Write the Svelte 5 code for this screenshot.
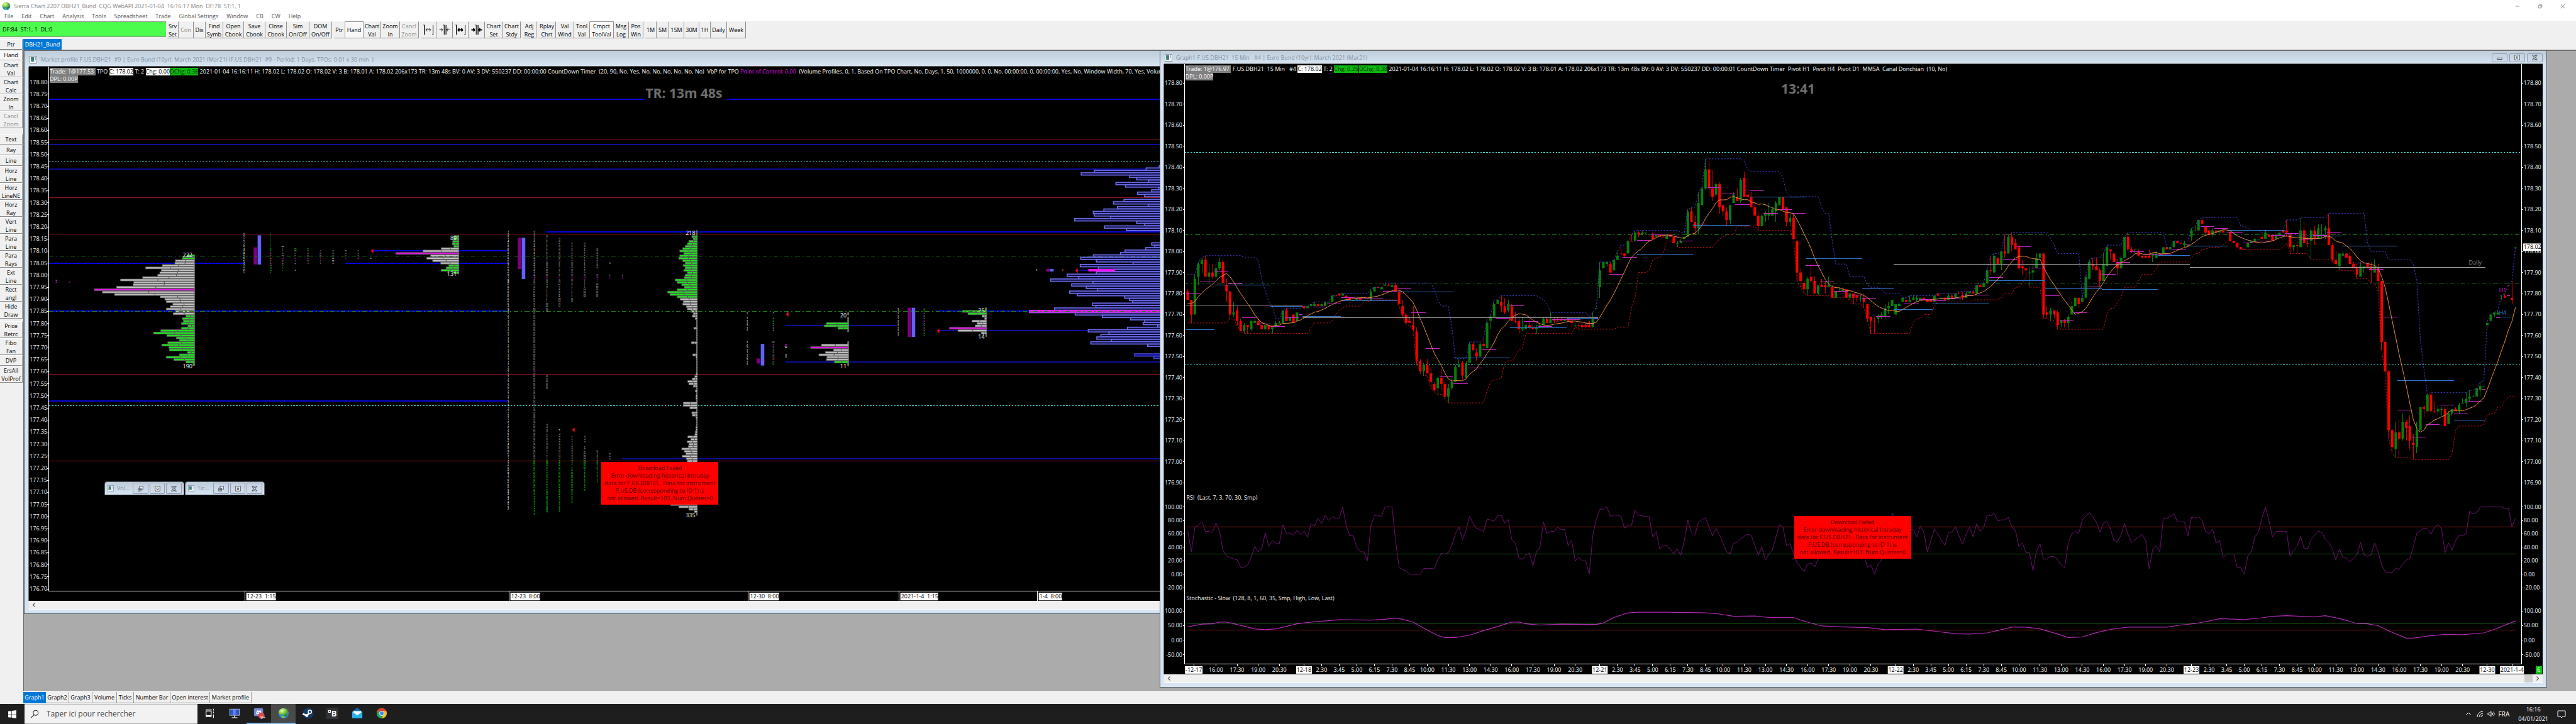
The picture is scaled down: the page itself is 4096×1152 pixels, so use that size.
<script>
  const menus = ['File', 'Edit', 'Chart', 'Analysis', 'Tools', 'Spreadsheet', 'Trade', 'Global Settings', 'Window', 'CB', 'CW', 'Help'];

  const toolGroups = [
    [['Srv Set', 18], ['Con', 24, 'off'], ['Dis', 19], ['Find Symb', 28], ['Open Cbook', 33], ['Save Cbook', 34], ['Close Cbook', 34], ['Sim On/Off', 36], ['DOM On/Off', 36]],
    [['Ptr', 18], ['Hand', 29, 'on'], ['Chart Val', 28], ['Zoom In', 30], ['Cancl Zoom', 30, 'off']],
    [['@wide', 25], ['@narrow', 26], ['@wideBold', 25], ['@narrowBold', 26], ['Chart Set', 29], ['Chart Stdy', 28]],
    [['Adj Reg', 22]],
    [['Rplay Chrt', 28], ['Val Wind', 29], ['Tool Val', 25], ['Cmpct ToolVal', 38, 'on'], ['Msg Log', 24], ['Pos Win', 23]],
    [['1M', 18], ['5M', 20], ['15M', 24], ['30M', 24], ['1H', 18], ['Daily', 26], ['Week', 30]],
  ];

  const inward = 'M2 11h7M9 11l-3-3M9 11l-3 3M24 11h-7M17 11l3-3M17 11l3 3';
  const outward = 'M8 11h10M8 11l3-3M8 11l3 3M18 11l-3-3M18 11l-3 3';

  const sideGroups = [
    ['Ptr', 'Hand*', 'Chart Val', 'Chart Calc', 'Zoom In', 'Cancl Zoom'],
    ['Text', 'Ray', 'Line', 'Horz Line', 'Horz LineNE', 'Horz Ray', 'Vert Line', 'Para Line', 'Para Rays', 'Ext Line', 'Rect angl', 'Hide Draw'],
    ['Price Retrc', 'Fibo Fan', 'DVP', 'ErsAll VolProf'],
  ];

  const sheets = [['Graph1', 36], ['Graph2', 37], ['Graph3', 37], ['Volume', 39], ['Ticks', 27], ['Number Bar', 58], ['Open interest', 63], ['Market profile', 66]];

  const failure = ['Download Failed', 'Error downloading historical Intraday', 'data for F.US.DBH21.\u00a0 Data for instrument', 'F.US.DB (corresponding to ID 1) is', 'not allowed. Result=103. Num Quotes=0'];

  const S = 0.8;

  /* ---- market profile: ticks are counted from 177.00 ---- */
  const L = { x: 46, y: 106 };
  const py = (t) => 163.3 + (180 - t) * 4.8;
  const lx = (v) => v * S - L.x;
  const ly = (v) => v * S - L.y;
  const leftPrices = Array.from({ length: 43 }, (_, k) => 180 - k * 5);

  const levels = [
    ['blue', 97, 2320, 173], ['red', 97, 2320, 156], ['navy', 97, 2320, 154], ['navy', 97, 2320, 144],
    ['red', 97, 2320, 132], ['blue', 1086, 2320, 118], ['red', 97, 2320, 117], ['blue', 742, 1009, 110], ['blue', 97, 488, 105],
    ['blue', 686, 1009, 105], ['blue', 97, 1009, 85], ['red', 97, 2320, 59], ['blue', 97, 1009, 48],
    ['navy', 1236, 2320, 24], ['red', 97, 2320, 23], ['navy', 1561, 1783, 79], ['navy', 1561, 2320, 64], ['blue', 1861, 2060, 85],
    ['navy', 1867, 2200, 77], ['navy', 2142, 2170, 102],
  ];

  const seq = (s) => s.split(' ').map(Number);
  const profiles = [
    { right: 386.5, top: 108, poc: 94, va: [84, 106], labels: [['222', 506], ['190', 727]],
      w: seq('15 24 38 39 64 97 66 69 73 103 147 121 122 155 199 183 159 68 59 56 43 48 56 38 42 17 24 22 26 13 26 67 81 55 36 30 53 65 51 50 14 30 56 41 17 3') },
    { right: 911.8, top: 116, poc: 109, va: [105, 111], labels: [['89', 472], ['131', 544]],
      w: seq('10 10 12 13 10 35 71 125 56 64 52 36 20 25 35 10') },
    { right: 1386, top: 118, poc: 999, va: [0, 90], labels: [['218', 462], ['335', 1024]],
      w: seq('2 2 11 8 17 20 24 29 35 27 35 37 29 24 28 24 27 20 24 26 44 40 31 26 40 59 54 40 34 28 29 22 20 13 8 10 4 2 2 2 7 2 2 2 2 2 12 2 2 2 2 9 3 2 2 2 2 2 2 3 5 10 19 17 8 2 4 2 3 3 2 28 28 15 2 11 10 3 2 2 2 3 3 4 5 19 13 20 17 18 31 26 23 30 22 20 25 30 28 30 35 40 38 36 40 44 46 50 50 48 45 50 52 53 37 17 6 2') },
    { right: 1686.5, top: 84, poc: 70, va: [65, 71], labels: [['20', 626], ['11', 728]],
      w: seq('2 0 2 2 44 48 21 2 0 0 0 0 2 54 75 30 46 59 43 44 28 2') },
    { right: 1961, top: 86, poc: 78, va: [76, 83], labels: [['25', 616], ['14', 669]],
      w: seq('3 48 37 9 4 29 19 23 74 57 11 2') },
  ];
  const rows = profiles.flatMap((p) =>
    p.w.map((w, k) => {
      const t = p.top - k;
      return { x: p.right - w, y: py(t) - 2.4, w, kind: t === p.poc ? 'poc' : t >= p.va[0] && t <= p.va[1] ? 'va' : 'out' };
    }).filter((r) => r.w > 0),
  );
  const spines = [[386, 108, 63], [911, 116, 101], [1385, 118, 1], [1686, 84, 84], [1686, 82, 77], [1686, 72, 63], [1960, 86, 75]];

  const volume = [
    [145, '1 27 130 156 60 46 22 87 68 2 16 44 30'],
    [131, '71 92 23 84 111 132 130 98 169 46 30 110 66'],
    [113, '16 10 28 69 78 132 157 126 53 158 122 90 126 184 161 217 133 175 146 124 179 164 70 60 54 134 127 209 259 168 114 58 30 33 4 64 142 101 117 125 96 137 24'],
    [67, '50 12'],
  ].flatMap(([top, s]) => seq(s).map((w, k) => ({ t: top - k, w })));

  const tpo = [
    [112, 98, 'a', 'g'], [112, 97, 'w', 'm'], [138, 97, 'x', 'm'],
    [485, 117, '11112234455677321', 'w'], [538, 117, 'iiiiii', 'e'], [538, 111, 'kk', 'e'], [538, 109, 'k', 'm'], [538, 108, 'k', 'g'], [538, 107, 'k', 'o'], [538, 106, 'kkq', 'g'], [538, 103, 'qqr', 'e'],
    [562, 112, 'm', 'w'], [562, 111, 'l', 'e'], [562, 110, 'lmm', 'g'], [562, 107, 'm', 'm'], [562, 106, 'pp', 'g'], [562, 104, 'ss', 'e'], [562, 102, 'r', 'g'],
    [587, 111, 'm', 'e'], [587, 110, 'mnn', 'g'], [587, 107, 'n', 'm'], [587, 106, 'tq', 'g'], [587, 102, 's', 'w'],
    [612, 111, 'n', 'e'], [612, 110, 'oop', 'g'], [612, 107, 'p', 'm'], [612, 106, 'us', 'g'],
    [637, 110, 'opp', 'g'], [637, 107, 't', 'm'], [637, 106, 'vt', 'g'],
    [662, 110, 'uuu', 'g'], [662, 107, 'uwv', 'w'], [687, 110, 'wuu', 'g'], [687, 107, 'v', 'm'], [712, 110, 'xxx', 'g'], [712, 107, 'w', 'm'], [737, 107, 'x', 'w'],
    [1010, 118, '112345566666667666578866666666643322' + '1'.repeat(25) + '2222221111111111112222355554555677776688776665544444332', 'w'],
    [1062, 118, 'GGZAAAAA', 'g'], [1062, 110, 'A', 'o'], [1062, 109, 'AAAAAAAAAA', 'g'], [1062, 99, 'A', 'm'], [1062, 98, 'CDDGHHHHKKKKMM' + 'N'.repeat(24), 'g'], [1062, 60, 'N', 'm'], [1062, 59, 'NNNNNN', 'g'], [1062, 53, 'O'.repeat(30), 'g'], [1062, 23, 'OOOOOOOOOOOOOPPPPPPPPPS', 'e'],
    [1087, 116, 'GCCCCCCCCCCBBBBBB', 'g'], [1087, 99, 'B', 'm'], [1087, 98, 'DGGHJJJJLLMMNN', 'g'], [1087, 58, 'OOOOOO', 'g'], [1087, 38, 'ddddcUUUUUUTTTT', 'g'], [1087, 23, 'QOOPPPPPPPPPPQQQQQQQQQ', 'e'],
    [1112, 115, 'GGEDDDDDDDCCCCCC', 'g'], [1112, 99, 'C', 'm'], [1112, 98, 'GHHJKKKKMMNN', 'g'], [1112, 36, 'e', 'w'], [1112, 34, 'dbbbbVVUUUU', 'g'], [1112, 23, 'TRROOOOOOORRRRRRSSSSSS', 'e'],
    [1137, 113, 'FEEEEEEEDDDDDD', 'g'], [1137, 99, 'D', 'm'], [1137, 98, 'HIKLLLLLNN', 'g'], [1137, 33, 'ccccbaVVVV', 'g'], [1137, 23, 'VTTTRRRRRRRRRSSSSS', 'e'],
    [1162, 113, 'GGFFFFFEEEEEGG', 'g'], [1162, 99, 'G', 'm'], [1162, 98, 'IJJLMMMM', 'g'], [1162, 33, 'ddd cbaWWW', 'g'], [1162, 23, 'WWWWSSSSSSSSS', 'e'],
    [1187, 111, 'GGGGGGFGG  H', 'g'], [1187, 99, 'H', 'm'], [1187, 98, 'J MMNNNN', 'g'], [1187, 27, 'bXXX', 'g'], [1187, 23, 'XXXXTTTTTT', 'e'],
    [1212, 105, 'G    I', 'g'], [1212, 99, 'I', 'm'], [1212, 26, 'baa', 'g'], [1237, 100, 'J', 'g'], [1237, 99, 'J', 'm'],
    [1485, 84, '1 111111    1221112211', 'w'], [1537, 84, '*', 'w'], [1537, 82, 'ddd', 'e'], [1537, 79, 'ddd', 'g'], [1537, 72, 'W', 'g'], [1537, 71, 'V', 'm'], [1537, 70, 'VVVUU', 'g'], [1537, 65, 'U', 'o'], [1537, 64, 'U', 'g'], [1537, 63, 'U', 'e'],
    [1562, 71, 'W', 'm'], [1562, 70, 'W  VV', 'w'],
    [1785, 86, '111111111111', 'w'], [1837, 86, 'kk', 'e'], [1837, 84, 'kkk', 'g'], [1837, 81, 'k', 'm'], [1837, 80, 'kk', 'g'], [1837, 78, 'k', 'o'], [1837, 77, 'k', 'g'], [1837, 76, 'kk', 'e'],
    [2060, 102, '1', 'w'], [2112, 102, '0', 'o'],
  ];
  const letters = tpo.flatMap(([x, top, s, c]) => [...s].map((ch, k) => ({ x, y: py(top - k), ch, c })).filter((l) => l.ch !== ' '));

  const blocks = [
    [504, 492, 7, 34, 'purple'], [512, 468, 7, 58, 'violet'], [1029, 473, 7, 62, 'purple'], [1037, 473, 7, 82, 'violet'],
    [1504, 713, 7, 10, 'purple'], [1512, 684, 7, 43, 'violet'], [1804, 612, 7, 58, 'purple'], [1812, 612, 7, 58, 'violet'],
    [2079, 535, 7, 5, 'purple'], [2087, 535, 7, 5, 'violet'], [2163, 535, 53, 5, 'pocbar'],
  ];
  const arrows = [[737, 499], [1137, 855], [1562, 625], [1862, 658], [2137, 538]];
  const leftDates = [[487, '12-23\u00a0 1:15', 47], [1012, '12-23\u00a0 8:00', 47], [1487, '12-30\u00a0 8:00', 47], [1787, '2021-1-4\u00a0 1:15', 60], [2062, '1-4\u00a0 8:00', 37]];

  /* ---- 15 minute candles: open close [high low], ticks above 177.00 ---- */
  const tape = `81 77 82 77;77 70 77 66;70 87 89 70;88 94 95 84;94 96 97 90;96 88 98 88;88 90 94 85;90 88 94 87;88 92 94 87;92 95 97 91;95 85 96 84;84 81 87 76;81 70 81 68;70 71 76 69;72 67 74 65;67 62 68 62;62 65 66 61;65 64 65 61;63 67 67 62;66 67 68 66;67 65 68 65;65 63 65 63;63 65 66 62;65 63 65 62;63 64 64 61;64 66 67 64;66 66 67 66;66 72 72 66;72 67 73 67;67 69 69 67;70 66 70 66;67 71 71 67;70 70;74 73 74 72;73 74;74 75;74 75 76 74;75 74;74 75;74 76;76 76;76 79;79 79;80 79;79 80;79 78 79 77;78 77;77 77;77 78;78 77;77 77;77 77;77 81 82 77;81 83;83 83;82 83;84 84 85 84;84 84 85 84;83 84;84 81 85 81;81 75 82 74;74 70 77 69;70 66 71 65;67 66 69 66;65 63 74 62;62 48 64 46;48 43 49 42;43 46 47 41;46 42 49 42;42 38 45 35;37 34 38 33;35 40 41 32;40 37 44 34;37 31 38 30;31 35 37 28;35 38 40 34;38 45 46 38;45 46 49 45;47 41 48 39;40 47 48 40;47 56 57 47;56 53 57 53;52 50 54 48;50 56 57 50;56 55 59 53;54 66 68 54;67 69 70 63;69 75 77 69;75 77;76 74 79 71;74 71 78 70;72 75 77 71;74 67 75 67;67 67 71 66;67 63 69 61;63 64 69 62;63 65 67 63;65 64 68 63;64 63 66 63;63 64 65 61;64 65 66 64;65 68 69 65;68 66 69 66;66 68 71 66;68 67 69 66;67 67 69 67;68 67 69 67;67 68;68 67;67 66 67 64;65 65 66 64;65 65 66 63;65 64;65 64 66 64;65 64 67 64;64 68 71 64;73 73;83 91 95 78;92 95;94 95 95 93;94 90 95 90;91 96;96 98 100 96;99 99 103 99;99 98 99 97;99 105;105 105 108 105;105 109 110 105;109 108 110 107;108 109 110 108;109 109 109 108;108 108;108 106 109 106;107 108;108 107;107 107;106 108;108 107 109 107;107 104;104 104 105 102;104 105 106 104;106 107;107 119 120 107;119 114 121 114;114 111 117 108;111 123 128 108;122 130 131 122;130 139 144 129;139 130 143 126;130 126 139 124;127 132 133 126;132 121 133 118;122 119 122 117;119 115 121 112;115 122 122 113;123 127 128 123;126 124 130 124;124 134 135 123;135 126 138 126;127 126 135 125;126 121 128 121;121 117 123 117;117 112 119 110;112 117 118 112;117 118 119 114;117 118 123 115;117 120 121 117;119 123 124 114;122 126;126 120;121 114 121 112;114 116 118 112;116 106 118 106;105 90 105 86;90 86 92 83;85 82 86 80;82 87 88 79;88 86 94 85;86 80 88 80;80 84 84 79;84 83 87 83;84 83 86 80;83 84 88 83;83 78 84 78;78 81;81 81 83 81;81 82 83 81;82 78 82 78;78 80 80 77;80 78 80 75;79 78 79 76;78 78 79 76;78 76 80 73;75 68 75 67;69 67 69 61;67 67 69 61;68 69 70 66;69 70 71 68;69 73 75 68;73 74 76 70;74 77;70 75;74 75 76 74;76 78;77 76;76 77 79 76;77 78 79 77;77 78 79 76;77 78;78 77;77 76;77 76;76 79;80 79;78 78;78 77;77 79 80 77;79 78 80 78;78 80;80 80 81 80;79 78 81 77;78 80 81 78;80 81;81 80;80 84;84 83 85 83;83 85;85 91 92 85;91 91 98 89;90 98 99 90;97 94 97 94;94 100 100 91;100 99 108 97;99 107 108 99;107 103 109 100;104 101 106 101;102 92 103 91;93 92 96 89;92 91 92 88;90 90 93 83;90 91 96 86;92 97 99 92;97 99 99 96;99 70 99 68;71 70 74 68;70 72 73 67;72 70 72 68;71 65 72 63;66 67 67 64;67 66 68 64;66 69 70 63;70 74 76 70;74 78;78 75 78 73;76 78;78 88;87 95 96 87;94 93 97 91;93 91 97 91;91 86 92 83;86 94 99 86;93 102 103 93;101 100 101 96;99 95 99 95;95 92 96 89;92 97 98 92;97 107;107 101 109 100;101 100 102 99;101 101 101 99;100 98 101 98;98 97;98 97;98 97 101 97;98 99 99 95;97 99 100 97;99 99;99 102;102 101;101 102;102 105;105 104;104 104;103 104 105 102;103 103;107 110 111 105;110 110 112 110;110 115;115 113 116 113;112 109 112 108;110 108 112 107;108 110 111 107;110 109;109 110;110 109;109 109;109 105;105 104;104 102;102 101;101 101;102 104;104 105;105 106 107 105;106 106;107 106;106 109 110 106;108 107;108 105;106 108;108 109;110 109;110 109 115 107;108 102 109 99;102 103 103 100;103 103 105 99;102 110 116 102;110 104 114 103;104 104 107 102;105 110 111 96;110 106 112 103;106 111 113 106;110 110 113 106;110 111 112 106;111 103 118 103;103 96 104 95;96 94 100 94;93 99 99 91;98 99 100 98;99 97;98 94 100 94;94 92 95 92;92 89 94 87;88 93 95 88;92 93 93 90;94 92;93 91 95 85;90 93 96 90;92 86 94 81;86 57 86 53;57 43 58 42;43 15 44 11;15 7 16 4;6 14 19 2;14 11 20 2;11 19 23 10;19 16 20 10;17 10 22 6;9 8 13 1;7 15 19 4;15 26;26 25 27 21;24 32;32 24 33 24;24 24 29 23;24 25 27 22;25 25 26 22;25 17 26 17;18 23 24 18;23 25 25 22;25 24 26 24;24 27 28 23;28 28 30 28;28 30 33 26;30 31 34 29;31 31 32 31;31 35;34 36 38 31;36 36;65 66 67 63;67 70;70 71 71 69;70 71 72 70;79 79 79 77;79 78 80 78;84 84;78 77 86 75;102 102`;
  const bars = tape.split(';').map((s, i) => {
    const [o, c, h, l] = seq(s.trim());
    return { i, o, c, h: h ?? Math.max(o, c), l: l ?? Math.min(o, c), up: c > o || (c === o && i % 3 !== 0) };
  });
  const R = { x: 1851, y: 102 };
  const bx = (i) => 2360.8 + 7 * i;
  const cy = (t) => 165.4 + (180 - t) * 4.184;
  const rx = (v) => v * S - R.x;
  const ry = (v) => v * S - R.y;
  const line = (pts) => pts.map(([x, y]) => x.toFixed(1) + ',' + y.toFixed(1)).join(' ');

  const upper = line(bars.map((b, i) => [bx(i), cy(Math.max(...bars.slice(Math.max(0, i - 10), i + 1).map((q) => q.h), i < 4 ? 89 : 0))]));
  const lower = line(bars.map((b, i) => [bx(i), cy(Math.min(...bars.slice(Math.max(0, i - 10), i + 1).map((q) => q.l), i < 8 ? 66 : 999))]));
  const closes = [73, 72, 75, 73, 76, 74, 77, 75, 76, 78, ...bars.map((b) => b.c)];
  const average = line(bars.map((b, i) => [bx(i), cy(closes.slice(i + 1, i + 11).reduce((a, v) => a + v, 0) / 10)]));

  const rsiY = (v) => 1142.3 - v * 1.34;
  const rsi = line(bars.map((b, i) => {
    let up = 0, down = 0;
    for (let k = i + 4; k <= i + 10; k++) {
      const d = closes[k] - closes[k - 1];
      if (d > 0) up += d; else down -= d;
    }
    return [bx(i), rsiY(up + down ? (100 * up) / (up + down) : 50)];
  }));
  const stoY = (v) => 1273.3 - v * 0.578;
  const stoPts = seq('0 46 4 55 7 56 9 62 11 62 16 48 19 39 22 36 25 39 31 56 35 62 43 70 52 69 56 72 59 76 61 72 64 62 68 35 71 16 73 9 76 9 80 17 84 33 88 47 92 62 94 62 96 56 100 52 106 55 113 54 116 54 118 59 121 78 125 94 128 96 137 96 138 95 143 95 147 94 151 90 155 82 161 83 165 78 172 78 176 62 180 49 185 46 193 43 198 36 207 38 212 31 218 22 222 21 227 25 231 36 234 45 238 45 242 39 247 21 250 9 254 11 258 26 262 37 267 45 278 45 282 52 286 57 290 66 293 74 300 71 305 77 308 82 312 84 320 80 323 84 328 72 332 57 335 56 338 50 341 32 346 7 348 7 352 14 357 20 362 19 368 25 371 37 377 66');
  const stochastic = line(Array.from({ length: stoPts.length / 2 }, (_, k) => [bx(stoPts[2 * k]), stoY(stoPts[2 * k + 1])]));

  const hourly = seq('0 80 4 85.5 8 90.5 12 84.6 16 68.5 20 65.4 24 64.3 28 68.5 36 73.7 40 75 44 78 48 77.6 52 77.4 56 81.2 60 82.3 64 71 68 54 72 40.5 76 37 80 44.6 84 53.4 88 68.3 92 74.3 96 66.8 100 64.4 104 67.7 108 67.7 112 65.4 120 89.2 124 97.2 128 105.4 132 108 136 107.3 140 104.9 144 113 148 130.3 152 127.4 156 122.3 160 128.8 164 118.2 168 120 172 118 176 93.2 180 85.5 184 81.2 188 79.2 192 77.8 196 69.2 204 75.2 208 77.3 212 76.7 216 77.6 220 79.2 224 79.2 228 87.6 232 96.2 236 102.2 240 92 244 79 248 67.3 252 70.9 256 83 260 89 264 94.7 268 99.8 272 98.8 276 98.4 280 101 288 111.9 292 110.9 296 109.2 300 104 304 105 308 107.7 312 108.5 316 105.8 320 107.6 324 109.2 332 94.5 336 91.6 340 68.8 344 24.6 348 11.8 352 17.7 356 27 360 22.8 364 28.7');
  const h1 = [
    ...Array.from({ length: hourly.length / 2 }, (_, k) => [hourly[2 * k] - 0.5, hourly[2 * k] + 3.5, hourly[2 * k + 1]]),
    [31.5, 32.5, 70], [115.5, 116.5, 67.8], [283.5, 284.5, 103.4], [367.5, 368.5, 34.5], [371.5, 372.5, 68.5], [374.5, 375.5, 79],
  ];
  const chain = seq('-0.5 62.7 7.5 84 23.5 73.8 32.5 69.1 43.5 76.7 59.5 80.7 75.5 49.5 91.5 63.7 107.5 68.3 116.5 0 127.5 98.8 143.5 112.3 159.5 125.9 175.5 96.5 191.5 82.1 200.5 72.5 211.5 75 227.5 86.2 243.5 82.3 259.5 82 275.5 98.2 284.5 102.7 295.5 110 311.5 107.2 327.5 102.7 343.5 38.7 359.5 19.9 368.5 0 372.5 68.8 375.5');
  const h4 = [];
  for (let k = 0; k + 2 < chain.length; k += 2) if (chain[k + 1] > 0) h4.push([chain[k], chain[k + 2], chain[k + 1]]);
  const daily = [[-0.5, 32.5, 74.6], [32.5, 116.5, 68.4], [200.5, 284.5, 93.8], [284.5, 368.5, 92.4]];

  const rightAxis = [
    ...Array.from({ length: 20 }, (_, k) => [(178.8 - k / 10).toFixed(2), cy(180 - k * 10)]),
    ...[100, 80, 60, 40, 20, 0, -20].map((v) => [v.toFixed(2), rsiY(v)]),
    ...[100, 50, 0, -50].map((v) => [v.toFixed(2), stoY(v)]),
  ];
  const clock = [[5, '2:30'], [10, '3:45'], [15, '5:00'], [20, '6:15'], [25, '7:30'], [30, '8:45'], [35, '10:00'], [41, '11:30'], [47, '13:00'], [53, '14:30'], [59, '16:00'], [65, '17:30'], [71, '19:00'], [77, '20:30']];
  const times = [[8, '16:00'], [14, '17:30'], [20, '19:00'], [26, '20:30'], ...[33, 117, 201, 285].flatMap((d) => clock.map(([o, s]) => [d + o, s]))];
  const days = [[1.7, '-12-17', 28], [33, '12-18', 25], [117, '12-21', 25], [201, '12-22', 25], [285, '12-23', 25], [369, '12-30', 25], [376, '2021-1-4', 38]];
</script>

{#snippet docIcon()}
  <svg class="doc" viewBox="0 0 12 12" aria-hidden="true"><rect x=".5" y=".5" width="11" height="11" fill="#fff" stroke="#8a949c" /><path d="M2 2h5v7H2z" fill="#3d7f86" /><path d="M2 6h2v3H2z" fill="#4aa35d" /><path d="M9 2h1v5H9zM7 9h3v1H7z" fill="#9aa" /></svg>
{/snippet}

{#snippet globe(size)}
  <svg width={size} height={size} viewBox="0 0 20 20" aria-hidden="true"><defs><radialGradient id="gl{size}" cx=".35" cy=".3" r=".8"><stop offset="0" stop-color="#e9fbb0" /><stop offset=".5" stop-color="#7cc832" /><stop offset="1" stop-color="#1c6a2c" /></radialGradient></defs><circle cx="10" cy="10" r="9" fill="#2d8fc4" /><path d="M4 3C9-1 17 2 18 7c-2 1-3 4-2 7-3 2-5 1-6-2C6 13 2 12 1 9c0-2 1-4 3-6z" fill="url(#gl{size})" /><path d="M6 16c2-2 5-1 6 2-2 1-5 0-6-2z" fill="#8fd140" /></svg>
{/snippet}

{#snippet caption(kind)}
  <svg viewBox="0 0 12 12" width="9" height="9" aria-hidden="true" fill="#fff" stroke="#4c5560" stroke-width="1.4">
    {#if kind === 'min'}<path d="M1 7h10v3H1z" />
    {:else if kind === 'max'}<path d="M1 1h10v10H1zM4.5 4.5h3v3h-3z" />
    {:else if kind === 'restore'}<path d="M4 1h7v6H4zM1 5h6v6H1zM3 7h2v2H3z" />
    {:else}<path d="M1 1h3l2 3 2-3h3L7.5 6 11 11H8L6 8l-2 3H1l3.500-5z" />{/if}
  </svg>
{/snippet}

{#snippet alertBox(cls)}
  <div class="alert {cls}" role="alert">{#each failure as row}<p>{row}</p>{/each}</div>
{/snippet}

<div class="app">
  <header class="title">
    {@render globe(14)}
    <span class="name">Sierra Chart 2207 DBH21_Bund&nbsp; CQG WebAPI 2021-01-04&nbsp; 16:16:17 Mon&nbsp; DF:78&nbsp; ST:1, 1</span>
    <button aria-label="Minimize"><svg viewBox="0 0 10 10"><path d="M1 5h8" /></svg></button>
    <button aria-label="Restore"><svg viewBox="0 0 10 10"><path d="M1.5 3.5h5v5h-5zM3.5 3.5v-2h5v5h-2" /></svg></button>
    <button aria-label="Close"><svg viewBox="0 0 10 10"><path d="M1 1l8 8M9 1l-8 8" /></svg></button>
  </header>

  <nav class="menu">{#each menus as m}<button>{m}</button>{/each}</nav>

  <div class="toolbar">
    <div class="status">DF:84&nbsp; ST:1, 1&nbsp; DL:0</div>
    {#each toolGroups as group}
      <div class="tools">
        {#each group as [label, w, state]}
          <button class={state} style:width="{w}px" aria-label={label.replace('@', 'Bar spacing ')}>
            {#if label[0] === '@'}
              <svg viewBox="0 0 26 22" width="20" height="19" aria-hidden="true">
                <path d={label.includes('wide') ? 'M3 1h2v20M23 1v20h-2M5 1v20' : 'M10 1h2v20M16 1v20M14 1v20'} fill="none" stroke="#000" stroke-width="1.2" />
                <path d={label.includes('wide') ? outward : inward} fill="none" stroke="#000" stroke-width={label.endsWith('Bold') ? 2.4 : 1.2} />
              </svg>
            {:else}{label}{/if}
          </button>
        {/each}
      </div>
    {/each}
  </div>

  <div class="main">
    <aside>
      {#each sideGroups as group}
        <div class="sidegroup">
          {#each group as s}
            <button class:on={s.endsWith('*')} class:tall={s.includes(' ')} class:off={s.startsWith('Cancl')}>{s.replace('*', '')}</button>
          {/each}
        </div>
      {/each}
    </aside>

    <div class="center">
      <div class="booktabs"><button class="book">DBH21_Bund</button></div>

      <main class="desk">
        <section class="win profile">
          <div class="bar">{@render docIcon()}<span>Market profile F.US.DBH21&nbsp; #9 | Euro Bund (10yr): March 2021 (Mar21) (F.US.DBH21&nbsp; #9 - Period: 1 Days, TPOs: 0.01 x 30 min&nbsp; )</span></div>
          <div class="view">
            <svg class="plot" viewBox="0 0 1810 850" role="img" aria-label="Market profile chart">
              <g transform="translate(-46 -106) scale(.8)">
                {#each levels as [c, a, b, t]}<path class="lv {c}" d="M{a} {py(t)}H{b}" />{/each}
                <path class="lv cyan" d="M97 {py(147)}H2305M97 {py(46)}H2305" />
                <rect x="1281" y="166" width="164" height="40" />
                {#each volume as v}
                  <rect class="vol" class:deep={v.t < 70} x={2305 - v.w} y={py(v.t) - 2} width={v.w + 30} height="4.5" />
                {/each}
                <rect class="pocbar" x="2046" y={py(85) - 2.5} width="280" height="5" />
                {#each spines as [x, a, b]}<path class="spine" d="M{x} {py(a) - 3}V{py(b) + 3}" />{/each}
                {#each rows as r}
                  <rect class="row {r.kind}" x={r.x} y={r.y + 0.5} width={r.w} height="3.8" />
                  {#if r.w > 6}<rect class="split" x={r.x + r.w * 0.5} y={r.y} width="1.5" height="4.8" />{/if}
                {/each}
                {#each blocks as [x, y, w, h, c]}<rect class={c} {x} {y} width={w} height={h} />{/each}
                <path class="lv green" d="M97 {py(108)}H2305M97 {py(85)}H2305" />
                {#each arrows as [x, y]}<path d="M{x} {y}l5-5v10z" fill="#f01010" />{/each}
                <path class="axis" d="M97 133V1175.500H2320" />
                {#each leftPrices as t}<path class="axis" d="M94 {py(t)}h3" />{/each}
                {#each leftDates as [x]}<path class="axis" d="M{x} 1175V1195" />{/each}
              </g>
              {#each letters as l}<text class="tpo {l.c}" x={lx(l.x)} y={ly(l.y) + 1}>{l.ch}</text>{/each}
              {#each leftPrices as t}<text class="num" x={lx(94)} y={ly(py(t)) + 3}>{(177 + t / 100).toFixed(2)}</text>{/each}
              {#each profiles as p}{#each p.labels as [s, y]}<text class="num" x={lx(p.right - 4)} y={ly(y) + 4}>{s}</text>{/each}{/each}
              <rect x="0" y={ly(1177)} width="50" height="16" />
              {#each leftDates as [x, s, w]}
                <rect x={lx(x) + 2} y={ly(1179)} width={w} height="12" fill="#fff" />
                <text class="date" x={lx(x) + 3} y={ly(1179) + 9}>{s}</text>
              {/each}
              <text class="count" x={lx(1283)} y={ly(195)}>TR: 13m 48s</text>
            </svg>
            <div class="info one">
              <span class="grey">Trade: 1@177.53&nbsp;</span><span>&nbsp;TPO&nbsp;</span><span class="white">C: 178.02</span><span>&nbsp;T: 2&nbsp;</span><span class="white">Chg: 0.00</span><span class="grn">DChg: 0.38</span><span>&nbsp;2021-01-04 16:16:11 H: 178.02 L: 178.02 O: 178.02 V: 3 B: 178.01 A: 178.02 206x173 TR: 13m 48s BV: 0 AV: 3 DV: 550237 DD: 00:00:00 CountDown Timer&nbsp; (20, 90, No, Yes, No, No, No, No, No, No)&nbsp; VbP for TPO <b>Point of Control: 0.00</b>&nbsp; (Volume Profiles, 0, 1, Based On TPO Chart, No, Days, 1, 50, 1000000, 0, 0, No, 00:00:00, 0, 00:00:00, Yes, No, Window Width, 70, Yes, Volume</span>
            </div>
            <div class="info two"><span class="grey">DPL: 0.00P</span></div>
            {@render alertBox('left')}
          </div>
          <div class="scroll"><button aria-label="Scroll left"><svg viewBox="0 0 8 10"><path d="M6 1L2 5l4 4" /></svg></button></div>
        </section>

        <section class="win graph">
          <div class="bar">
            {@render docIcon()}<span>Graph1 F.US.DBH21&nbsp; 15 Min&nbsp;&nbsp; #4 | Euro Bund (10yr): March 2021 (Mar21)</span>
            <div class="caps"><button aria-label="Minimize">{@render caption('min')}</button><button aria-label="Maximize">{@render caption('max')}</button><button aria-label="Close">{@render caption('close')}</button></div>
          </div>
          <div class="view">
            <svg class="plot" viewBox="0 0 2192 971" role="img" aria-label="Candlestick chart with RSI and stochastic">
              <g transform="translate(-1851 -102) scale(.8)">
                <path class="lv cyan" d="M2354 {cy(147)}H5010M2354 {cy(46)}H5010" />
                <path class="lv green" d="M2354 {cy(108)}H5010M2354 {cy(85)}H5010" />
                {#each bars as b}
                  <g class:rise={b.up} class:fall={!b.up}>
                    {#if b.h > b.l}<path class="wick" d="M{bx(b.i)} {cy(b.h)}V{cy(b.l)}" />{/if}
                    <rect x={bx(b.i) - 2.5} y={cy(Math.max(b.o, b.c))} width="5" height={Math.max(1.25, Math.abs(b.o - b.c) * 4.184)} />
                  </g>
                {/each}
                <polyline class="band hi" points={upper} />
                <polyline class="band lo" points={lower} />
                {#each daily as [a, b, t]}<path class="seg day" d="M{bx(a)} {cy(t)}H{bx(b)}" />{/each}
                {#each h4 as [a, b, t]}<path class="seg four" d="M{bx(a)} {cy(t)}H{bx(b)}" />{/each}
                {#each h1 as [a, b, t]}<path class="seg hour" d="M{bx(a)} {cy(t)}H{bx(b)}" />{/each}
                <polyline class="avg" points={average} />
                <polyline class="rsi" points={rsi} />
                <path class="seg r" d="M2360 {rsiY(70)}H5000M2360 {stoY(35)}H5000" />
                <path class="seg g" d="M2360 {rsiY(30)}H5000M2360 {stoY(59)}H5000" />
                <polyline class="sto" points={stochastic} />
                <path class="axis" d="M2354 127V1321H5012V127" />
                {#each rightAxis as [, y]}<path class="axis" d="M2351 {y}h3M5012 {y}h3" />{/each}
                {#each times as [i]}<path class="axis" d="M{bx(i)} 1321v4" />{/each}
                {#each days as [i]}<path class="axis" d="M{bx(i)} 1321v4" />{/each}
              </g>
              {#each rightAxis as [s, y]}
                <text class="num" x={rx(2350)} y={ry(y) + 3}>{s}</text>
                <text class="num first" x={rx(5016)} y={ry(y) + 3}>{s}</text>
              {/each}
              <rect x={rx(5015)} y={ry(cy(102)) - 6} width="28" height="12" fill="#fff" />
              <text class="date" x={rx(5016)} y={ry(cy(102)) + 3}>178.02</text>
              {#each times as [i, s]}<text class="num mid" x={rx(bx(i))} y={ry(1332) + 3}>{s}</text>{/each}
              {#each days as [i, s, w]}
                <rect x={rx(bx(i)) - w / 2} y={ry(1325)} width={w} height="12" fill="#fff" />
                <text class="date mid" x={rx(bx(i))} y={ry(1332) + 3}>{s}</text>
              {/each}
              <rect x={rx(5040)} y={ry(1325)} width="10" height="12" fill="#0fc40f" />
              <text class="num mid" x={rx(5046)} y={ry(1332) + 3}>6</text>
              <text class="num first" x={rx(2358)} y={ry(990) + 3}>RSI&nbsp; (Last, 7, 3, 70, 30, Smp)</text>
              <text class="num first" x={rx(2358)} y={ry(1190) + 3}>Stochastic - Slow&nbsp; (128, 8, 1, 60, 35, Smp, High, Low, Last)</text>
              <text class="num first dim" x={rx(4907)} y={ry(523) + 3}>Daily</text>
              <text class="num first mag" x={rx(4967)} y={ry(578) + 3}>H1</text>
              <text class="num first sky" x={rx(4967)} y={ry(623) + 3}>H4</text>
              <text class="count" x={rx(3540)} y={ry(186)}>13:41</text>
            </svg>
            <div class="info one">
              <span class="grey">Trade: 1@176.97&nbsp;</span><span>&nbsp;F.US.DBH21&nbsp; 15 Min&nbsp;&nbsp; #4&nbsp;</span><span class="white">C: 178.02</span><span>&nbsp;T: 2&nbsp;</span><span class="grn">Chg: 0.25</span><span class="grn">DChg: 0.38</span><span>&nbsp;2021-01-04 16:16:11 H: 178.02 L: 178.02 O: 178.02 V: 3 B: 178.01 A: 178.02 206x173 TR: 13m 48s BV: 0 AV: 3 DV: 550237 DD: 00:00:01 CountDown Timer&nbsp; Pivot H1&nbsp; Pivot H4&nbsp; Pivot D1&nbsp; MMSA&nbsp; Canal Donchian&nbsp; (10, No)</span>
            </div>
            <div class="info two"><span class="grey">DPL: 0.00P</span></div>
            {@render alertBox('right')}
          </div>
          <div class="scroll">
            <button aria-label="Scroll left"><svg viewBox="0 0 8 10"><path d="M6 1L2 5l4 4" /></svg></button>
            <i class="thumb"></i>
            <button aria-label="Scroll right"><svg viewBox="0 0 8 10"><path d="M2 1l4 4-4 4" /></svg></button>
          </div>
        </section>

        <div class="tray">
          {#each ['Vol...', 'Tic...'] as name}
            <div class="mini">{@render docIcon()}<span>{name}</span><button aria-label="Restore">{@render caption('restore')}</button><button aria-label="Maximize">{@render caption('max')}</button><button aria-label="Close">{@render caption('close')}</button></div>
          {/each}
        </div>
      </main>

      <div class="sheets">{#each sheets as [s, w], k}<button class:active={k === 0} style:width="{w}px">{s}</button>{/each}</div>
    </div>
  </div>

  <footer>
    <button class="begin" aria-label="Start"><svg viewBox="0 0 16 16" width="13" height="13"><path fill="#fff" d="M0 2.300L6.500 1.400v6.200H0zM7.300 1.300L16 0v7.600H7.300zM0 8.400h6.500v6.200L0 13.700zM7.300 8.400H16V16l-8.700-1.300z" /></svg></button>
    <label class="search"><svg viewBox="0 0 16 16" width="14" height="14" fill="none" stroke="#222" stroke-width="1.2"><circle cx="10" cy="6" r="4.5" /><path d="M7 9.500L1.500 15" /></svg><input type="text" placeholder="Taper ici pour rechercher" aria-label="Taper ici pour rechercher" /></label>
    <div class="apps">
      <button aria-label="Task view"><svg viewBox="0 0 20 20" fill="none" stroke="#fff" stroke-width="1.3"><path d="M3 6h9v8H3zM3 3v1h9V3M3 17v-1h9v1M16 2v3M16 7v3M16 12v6" /></svg></button>
      <button aria-label="Desktop"><svg viewBox="0 0 20 20"><path d="M1 2h18v12H1z" fill="#b9c4de" /><path d="M2 3h16v10H2z" fill="#2f55c8" /><path d="M7 3h5v10H7z" fill="#5d85ec" /><path d="M9 14h2v3H9zM5 17h10v1.500H5z" fill="#ccc" /></svg></button>
      <button aria-label="Discord" class="open"><svg viewBox="0 0 20 20"><path d="M3 1h12a2 2 0 0 1 2 2v15l-3-3H3a2 2 0 0 1-2-2V3a2 2 0 0 1 2-2z" fill="#7488d6" /><path d="M5 11c0-3 .5-5 1.500-6L8 4.500l.5 1h2l.5-1 1.500.500c1 1 1.500 3 1.500 6l-2 1.200-.7-1.200H7.700L7 12.200z" fill="#fff" /><circle cx="7.8" cy="8.6" r="1" fill="#7488d6" /><circle cx="11.2" cy="8.6" r="1" fill="#7488d6" /><circle cx="14" cy="14" r="5.5" fill="#e0474c" /></svg><em>9+</em></button>
      <button aria-label="Sierra Chart" class="open current">{@render globe(18)}</button>
      <button aria-label="Steam"><svg viewBox="0 0 20 20"><circle cx="10" cy="10" r="9.5" fill="#143a6b" /><path d="M.5 11L8 14l5-6" fill="none" stroke="#fff" stroke-width="3" /><circle cx="13" cy="7.5" r="3.8" fill="#fff" /><circle cx="13" cy="7.5" r="2.2" fill="#143a6b" /><circle cx="7.5" cy="14" r="2.6" fill="#fff" /></svg></button>
      <button aria-label="B"><span class="bb"><i></i>B</span></button>
      <button aria-label="Mail"><svg viewBox="0 0 20 20"><path d="M1 7l9-7 9 7v12H1z" fill="#0c66b3" /><path d="M1 7l9 6.500L19 7v12H1z" fill="#28b2ee" /><path d="M3 6h14v2.500l-7 5-7-5z" fill="#fff" /></svg></button>
      <button aria-label="Chrome"><svg viewBox="0 0 20 20"><circle cx="10" cy="10" r="9" fill="#fbc116" /><path d="M10 10L2.200 5.500A9 9 0 0 1 17.800 5.500L18 6h-8z" fill="#e33b2e" /><path d="M10 10L2.200 5.500A9 9 0 0 0 9.500 19l4-6.500z" fill="#1da261" /><circle cx="10" cy="10" r="4.3" fill="#fff" /><circle cx="10" cy="10" r="3.4" fill="#4285f4" /></svg></button>
    </div>
    <div class="systray">
      <button aria-label="Hidden icons"><svg viewBox="0 0 12 12"><path d="M2 8l4-4 4 4" /></svg></button>
      <button aria-label="Network"><svg viewBox="0 0 12 12"><path d="M2 11C2 6 6 2 11 2M5 11c0-3 3-6 6-6M8 11c0-2 1-3 3-3" /></svg></button>
      <button aria-label="Volume"><svg viewBox="0 0 12 12"><path d="M1 4.500h2L6 2v8L3 7.500H1zM8 4q1.500 2 0 4M10 2.500q2.500 3.500 0 7" /></svg></button>
      <span>FRA</span>
      <time><span>16:16</span><span>04/01/2021</span></time>
      <button aria-label="Notifications" class="note"><svg viewBox="0 0 14 14"><path d="M1 2h12v9H9l-2 2-2-2H1z" /></svg></button>
    </div>
  </footer>
</div>

<style>
  :global(body) { background: #f0f0f0; overflow: hidden; }
  .app { display: grid; grid-template-rows: 19px 14px 29px minmax(0, 1fr) 32px; height: 100vh; font: 9px/12px "Segoe UI", "Open Sans", sans-serif; color: #000; background: #f0f0f0; }
  button { font: inherit; color: inherit; border: 0; padding: 0; margin: 0; background: none; text-align: center; }
  p { margin: 0; }
  span { white-space: nowrap; }

  .title { display: flex; align-items: center; background: #fff; color: #858585; padding: 0 3px; }
  .title .name { margin: 0 auto 0 5px; }
  .title button { width: 36px; display: grid; place-items: center; }
  .title button svg { width: 8px; height: 8px; fill: none; stroke: #777; }
  .menu { display: flex; gap: 13px; background: #fff; color: #555; padding-left: 7px; align-items: center; }

  .toolbar { display: flex; gap: 3px; background: #f0f0f0; padding-top: 1px; }
  .status { width: 264px; height: 25px; background: #4dfd4d; border: 1px solid #8c8c8c; border-width: 1px 0; padding-left: 4px; line-height: 24px; box-sizing: border-box; margin-right: -1px; }
  .tools { display: flex; height: 27px; }
  .tools button { display: grid; place-items: center; line-height: 13px; box-sizing: border-box; border-right: 1px solid #909090; border-bottom: 1px solid #909090; border-top: 1px solid #fafafa; }
  .tools button.on, aside button.on { background: #f8f8f8; border-top-color: #8c8c8c; }
  .tools .off, aside .off { color: #8c8c8c; }

  .main { display: grid; grid-template-columns: 37px minmax(0, 1fr); min-height: 0; }
  aside { width: 36px; }
  .sidegroup { display: grid; margin-bottom: 9px; }
  .sidegroup + .sidegroup { margin-bottom: 4px; }
  aside button { height: 17px; line-height: 13px; box-sizing: border-box; border-right: 1px solid #8c8c8c; border-bottom: 1px solid #8c8c8c; border-top: 1px solid #fff; }
  aside button.tall { height: 27px; padding: 0 2px; }

  .center { display: grid; grid-template-rows: 18px minmax(0, 1fr) 20px; min-width: 0; min-height: 0; }
  .booktabs { border-bottom: 1px solid #8a8a8a; box-sizing: border-box; }
  .book { background: #0078d7; color: #fff; height: 17px; width: 61px; display: block; }
  .desk { position: relative; overflow: hidden; background: #ababab; border-left: 1px solid #696969; border-top: 1px solid #696969; }

  .win { position: absolute; top: 0; box-sizing: border-box; border: 1px solid #4d5a63; border-top: 0; background: #d7e4f2; padding: 0 6px 6px; }
  .profile { left: 0; width: 45%; padding: 0 7px 6px; }
  .graph { left: 44.5%; width: 54.36%; }
  .bar { display: flex; align-items: center; gap: 5px; color: #8391a0; height: 21px; margin: 0 -6px; padding: 0 6px; background: linear-gradient(#bfcddb, #d7e4f2); }
  .profile .bar { height: 25px; padding-top: 3px; box-sizing: border-box; }
  .mini .doc { width: 12px; height: 10px; flex: none; }
  .bar .doc { width: 14px; height: 12px; flex: none; }
  .caps { margin-left: auto; display: flex; gap: 3px; }
  .caps button, .mini button { width: 25px; height: 14px; border: 1px solid #8c9bb0; border-radius: 2px; box-sizing: border-box; background: linear-gradient(#c4d0de, #d2deeb); display: grid; place-items: center; }
  .view { position: relative; background: #000; overflow: hidden; box-shadow: 0 -1px #666, -1px 0 #666; }
  .plot { display: block; width: 100%; height: auto; }

  .info { position: absolute; left: 33px; top: 2px; display: flex; color: #f8f8f8; height: 12px; line-height: 12px; }
  .graph .info { left: 34px; }
  .info.two { top: 14px; }
  .info b { font-weight: 400; color: #e010e0; }
  .info .grey { background: #808080; color: #fff; }
  .info .white { background: #fff; color: #000; }
  .info .grn { background: #0bb80b; color: #043004; }
  .info .grn + .grn { border-left: 1px solid #000; }

  .alert { position: absolute; background: #f00; color: #4d0000; text-align: center; width: 186px; box-sizing: border-box; padding: 4px 0; height: 68px; }
  .alert.left { left: 50.3%; top: 74%; }
  .alert.right { left: 45.7%; top: 74%; }

  .scroll { display: flex; height: 13px; background: #f0f0f0; border-bottom: 1px solid #fff; }
  .scroll button { width: 16px; display: grid; place-items: center; }
  .scroll svg { width: 6px; height: 9px; fill: none; stroke: #555; stroke-width: 1.5; }
  .thumb { margin-left: auto; width: 13px; background: #cdcdcd; }

  .tray { position: absolute; left: 128px; top: 685px; display: flex; gap: 1px; }
  .mini { width: 127px; height: 22px; box-sizing: border-box; display: flex; align-items: center; gap: 2px; padding: 0 3px; border: 1px solid #56626e; border-radius: 4px 4px 0 0; background: linear-gradient(#bfcddb, #d7e4f2); color: #8391a0; }
  .mini span { width: 24px; padding-left: 2px; }
  .mini button { height: 18px; }

  .axis { fill: none; stroke: #fff; stroke-width: 1.25; shape-rendering: crispEdges; }
  .lv { fill: none; stroke-width: 1.25; shape-rendering: crispEdges; }
  .blue { stroke: #0404dd; stroke-width: 2.5; }
  .navy { stroke: #0d0d98; stroke-width: 2.5; }
  .red { stroke: #981616; }
  .cyan { stroke: #4fe0d8; stroke-dasharray: 3 3; }
  .green { stroke: #1f7d1f; stroke-dasharray: 9 5 2.5 5; }
  .vol { fill: #05052e; stroke: #6a6ae6; stroke-width: 2.2; }
  .deep { fill: #0505a0; stroke: #4444b0; }
  .pocbar { fill: #f010f0; }
  .spine { stroke: #5e5e5e; stroke-width: 2.5; }
  .row { stroke: #5e5e5e; stroke-width: 1; }
  .va { fill: #c3c3c3; }
  .out { fill: #20e820; }
  .poc { fill: #e614e6; }
  .split { fill: #5e5e5e; }
  .purple { fill: #800080; }
  .violet { fill: #6060ff; }
  text { font-size: 9px; }
  .num { fill: #f4f4f4; text-anchor: end; }
  .date { fill: #000; }
  .mid { text-anchor: middle; }
  .first { text-anchor: start; }
  .dim { fill: #8c8c8c; }
  .mag { fill: #d020d0; }
  .sky { fill: #2a7fe0; }
  .tpo { font-size: 4px; text-anchor: middle; font-weight: 600; }
  .tpo.g { fill: #9a9a9a; }
  .tpo.w { fill: #f0f0f0; }
  .tpo.e { fill: #10d010; }
  .tpo.m { fill: #e010e0; }
  .tpo.o { fill: #e07010; }
  .count { font-size: 21px; font-weight: 700; fill: #6e6e6e; }

  .rise rect { fill: #0a7d0a; }
  .fall rect { fill: #f80000; }
  .wick { stroke-width: 1.25; shape-rendering: crispEdges; }
  .rise .wick { stroke: #0a7d0a; }
  .fall .wick { stroke: #d80000; }
  .band { fill: none; stroke-width: 1.25; stroke-dasharray: 3 3; }
  .hi { stroke: #4343d8; }
  .lo { stroke: #cc1616; }
  .seg { fill: none; stroke-width: 1.25; shape-rendering: crispEdges; }
  .day { stroke: #a2a2a2; }
  .four { stroke: #2f78d0; }
  .hour { stroke: #c828c8; }
  .avg { fill: none; stroke: #e89040; stroke-width: 1.25; }
  .rsi { fill: none; stroke: #6c126c; stroke-width: 1.25; }
  .seg.r { stroke: #9c1616; }
  .seg.g { stroke: #1f701f; }
  .sto { fill: none; stroke: #b02ab0; stroke-width: 1.5; }

  .sheets { display: flex; border-top: 1px solid #fff; padding-bottom: 1px; }
  .sheets button { box-sizing: border-box; border-right: 1px solid #999; border-bottom: 1px solid #999; white-space: nowrap; }
  .sheets .active { background: #0078d7; color: #fff; border: 0; }

  footer { display: flex; background: #1e1e1f; color: #fff; }
  footer button { display: grid; place-items: center; }
  .begin { width: 39px; }
  .search { display: flex; align-items: center; gap: 12px; width: 275px; box-sizing: border-box; padding-left: 9px; background: #f2f2f2; border: 1px solid #aaa; border-width: 1px 0; }
  .search input { border: 0; background: none; font: 12px/16px "Segoe UI", "Open Sans", sans-serif; flex: 1; min-width: 0; padding: 0; outline: 0; }
  .search input::placeholder { color: #444; opacity: 1; }
  .apps { display: flex; }
  .apps button { width: 39px; position: relative; box-sizing: border-box; border-bottom: 2px solid transparent; }
  .apps svg { width: 18px; height: 18px; }
  .apps .open { border-bottom-color: #76b9ed; }
  .apps .current { background: #4a4a4b; }
  .apps em { position: absolute; right: 9px; bottom: 4px; font: 7px/9px "Open Sans", sans-serif; }
  .bb { background: #333; width: 19px; height: 18px; font: 700 13px/18px "Open Sans", sans-serif; display: flex; gap: 1px; justify-content: center; }
  .bb i { width: 2px; height: 2px; border: 1px solid #fff; margin-top: 4px; }
  .systray { margin-left: auto; display: flex; align-items: center; gap: 6px; padding-right: 18px; font-size: 10px; }
  .systray button { width: 12px; height: 32px; }
  .systray svg { width: 12px; height: 12px; fill: none; stroke: #fff; }
  .systray time { display: grid; text-align: center; line-height: 15px; font-size: 9px; margin: 0 8px; }
  .systray .note svg { width: 14px; height: 14px; }
</style>
